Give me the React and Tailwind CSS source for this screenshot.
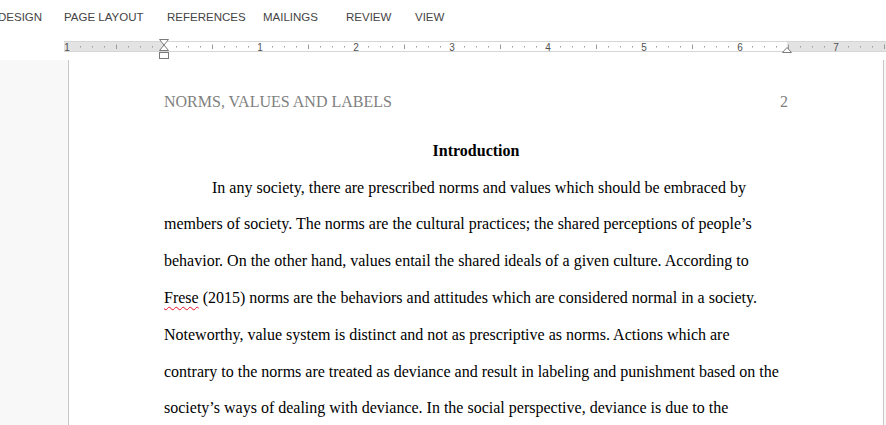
const tabs = [
  { label: "DESIGN", w: "w-[66px]", align: "ml-[-2px]" },
  { label: "PAGE LAYOUT", w: "w-[103px]", align: "" },
  { label: "REFERENCES", w: "w-[96px]", align: "" },
  { label: "MAILINGS", w: "w-[83px]", align: "" },
  { label: "REVIEW", w: "w-[69px]", align: "" },
  { label: "VIEW", w: "w-[60px]", align: "" },
];

function Ruler() {
  const marks = [];
  // inches relative to left margin at x=164, 96px per inch
  for (let i = -8; i <= 60; i++) {
    if (i % 8 === 0) continue;
    const x = 164 + i * 12;
    if (x < 66 || x > 884) continue;
    if (i % 4 === 0) {
      marks.push(<line key={i} x1={x + 0.5} y1={8.5} x2={x + 0.5} y2={13} stroke="#9a9a9a" strokeWidth="1" />);
    } else {
      marks.push(<rect key={i} x={x} y={10} width={1} height={1.5} fill="#9a9a9a" />);
    }
  }
  const nums = [
    { n: 1, x: 67 },
    { n: 1, x: 260 },
    { n: 2, x: 356 },
    { n: 3, x: 452 },
    { n: 4, x: 548 },
    { n: 5, x: 644 },
    { n: 6, x: 740 },
    { n: 7, x: 836 },
  ];
  return (
    <svg width="886" height="24" className="block">
      <rect x="64" y="5" width="822" height="11" fill="#ffffff" />
      <rect x="64" y="5" width="100" height="11" fill="#e3e3e3" />
      <rect x="787" y="5" width="99" height="11" fill="#e3e3e3" />
      <line x1="64" y1="5.5" x2="886" y2="5.5" stroke="#d6d6d6" />
      <line x1="64" y1="15.5" x2="886" y2="15.5" stroke="#d6d6d6" />
      {marks}
      {nums.map((d, i) => (
        <text
          key={i}
          x={d.x}
          y={14.5}
          textAnchor="middle"
          fontSize="10"
          fontFamily="Liberation Sans, Arial, sans-serif"
          fill="#505050"
        >
          {d.n}
        </text>
      ))}
      <path d="M159.5 3.5 L168.5 3.5 L164 9 Z" fill="#fff" stroke="#7a7a7a" />
      <path d="M164 9 L159.5 14.5 L168.5 14.5 Z" fill="#fff" stroke="#7a7a7a" />
      <rect x="159.5" y="16.5" width="9" height="6" fill="#fff" stroke="#7a7a7a" />
      <path d="M787 11.5 L782.5 16.5 L791.5 16.5 Z" fill="#fff" stroke="#7a7a7a" />
    </svg>
  );
}

const lines = [
  "members of society. The norms are the cultural practices; the shared perceptions of people’s",
  "behavior. On the other hand, values entail the shared ideals of a given culture. According to",
];

export default function App() {
  return (
    <div className="w-[886px] h-[425px] overflow-hidden bg-white" style={{ fontFamily: "'Liberation Serif', 'Times New Roman', serif" }}>
      {/* Ribbon tabs */}
      <div className="h-[36px] flex items-center text-[11.5px] text-[#444] font-['Liberation_Sans',Arial,sans-serif] pb-[1px]">
        {tabs.map((t) => (
          <div key={t.label} className={`${t.w} ${t.align} whitespace-nowrap shrink-0`}>
            {t.label}
          </div>
        ))}
      </div>

      {/* Ruler */}
      <Ruler />

      {/* Document area */}
      <div className="flex h-[365px] bg-[#f8f8f8]">
        <div className="w-[68px] shrink-0" />
        <div className="w-[816px] shrink-0 bg-white border-x border-[#c8c8c8] px-[95px] pt-[24px] text-[16px] leading-[36.8px] text-black">
          <div className="flex justify-between text-[#7f7f7f]">
            <span>NORMS, VALUES AND LABELS</span>
            <span>2</span>
          </div>
          <div className="mt-[12px] text-center font-bold">Introduction</div>
          <div className="whitespace-nowrap">
            <div className="pl-[48px]">In any society, there are prescribed norms and values which should be embraced by</div>
            {lines.map((l) => (
              <div key={l}>{l}</div>
            ))}
            <div>
              <span className="underline decoration-wavy decoration-[#e81123] decoration-1 underline-offset-[3px]">Frese</span> (2015) norms are the behaviors and attitudes which are considered normal in a society.
            </div>
            <div>Noteworthy, value system is distinct and not as prescriptive as norms. Actions which are</div>
            <div>contrary to the norms are treated as deviance and result in labeling and punishment based on the</div>
            <div>society’s ways of dealing with deviance. In the social perspective, deviance is due to the</div>
          </div>
        </div>
        <div className="flex-1" />
      </div>
    </div>
  );
}
